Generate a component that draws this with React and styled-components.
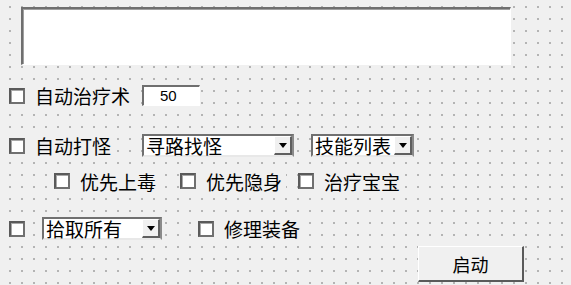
import React from 'react';
import styled, { createGlobalStyle } from 'styled-components';

const GlobalStyle = createGlobalStyle`
  html, body {
    margin: 0;
    padding: 0;
    background: #f0f0f0;
  }
  body {
    font-family: "Noto Sans CJK SC", "Liberation Sans", sans-serif;
    color: #000;
  }
`;

const CJK = `"Noto Sans CJK SC", "Noto Sans", sans-serif`;

const Canvas = styled.div`
  width: 571px;
  height: 285px;
  box-sizing: border-box;
  padding-top: 7px;
  display: flex;
  flex-direction: column;
  overflow: hidden;
  background-color: #f0f0f0;
  background-image: radial-gradient(circle at 0.5px 0.5px, #000 0.8px, transparent 1px);
  background-size: 12px 12px;
  background-position: 9.5px 6.5px;
`;

const Memo = styled.textarea`
  margin: 0 0 0 21px;
  width: 490px;
  height: 58px;
  box-sizing: border-box;
  resize: none;
  outline: none;
  background: #fff;
  border-style: solid;
  border-width: 2px 1px 1px 2px;
  border-color: #6f6f6f #fff #fff #6f6f6f;
  box-shadow: inset 1px 1px #a0a0a0;
`;

const Row = styled.div`
  display: flex;
  align-items: center;
  height: ${(p) => p.$h}px;
  margin-top: ${(p) => p.$mt}px;
`;

const Control = styled.label`
  display: flex;
  align-items: center;
  gap: 10px;
  flex: none;
  width: ${(p) => p.$w}px;
  margin-left: ${(p) => p.$ml || 0}px;
  height: 21px;
  background: #f0f0f0;
  font-family: ${CJK};
  font-size: 19px;
  line-height: 21px;
  white-space: nowrap;
`;

const Box = styled.span`
  flex: none;
  width: 16px;
  height: 16px;
  box-sizing: border-box;
  background: #fff;
  border: 2px solid #707070;
  border-top-color: #5a5a5a;
  border-left-color: #5a5a5a;
  box-shadow: inset 1px 1px #a8a8a8;
`;

const NumInput = styled.div`
  flex: none;
  margin-left: ${(p) => p.$ml}px;
  width: 58px;
  height: 21px;
  box-sizing: border-box;
  background: #fff;
  border-style: solid;
  border-width: 2px 1px 1px 2px;
  border-color: #6f6f6f #fff #fff #6f6f6f;
  padding-left: 16px;
  font-family: "Liberation Sans", Arial, sans-serif;
  font-size: 15px;
  line-height: 18px;
`;

const Combo = styled.div`
  flex: none;
  display: flex;
  align-items: stretch;
  margin-left: ${(p) => p.$ml || 0}px;
  width: ${(p) => p.$w}px;
  height: 23px;
  box-sizing: border-box;
  background: #fff;
  border-style: solid;
  border-width: 2px;
  border-color: #707070 #8a8a8a #e8e8e8 #707070;
`;

const ComboText = styled.span`
  flex: 1;
  min-width: 0;
  padding-left: 2px;
  font-family: ${CJK};
  font-size: 19px;
  line-height: 19px;
  white-space: nowrap;
`;

const ComboButton = styled.span`
  flex: none;
  width: 18px;
  box-sizing: border-box;
  display: flex;
  align-items: center;
  justify-content: center;
  background: #f0f0f0;
  border-style: solid;
  border-width: 1px 2px 2px 1px;
  border-color: #fff #5f5f5f #5f5f5f #fff;
`;

const Arrow = styled.span`
  width: 0;
  height: 0;
  border-left: 4.5px solid transparent;
  border-right: 4.5px solid transparent;
  border-top: 5px solid #000;
`;

const Button = styled.button`
  margin-left: 418px;
  width: 106px;
  height: 36px;
  box-sizing: border-box;
  background: #f0f0f0;
  border-style: solid;
  border-width: 1px 2px 2px 1px;
  border-color: #fff #5a5a5a #5a5a5a #fff;
  font-family: ${CJK};
  font-size: 18px;
  color: #000;
  padding: 0;
`;

const Check = ({ w, ml, children }) => (
  <Control $w={w} $ml={ml}>
    <Box />
    {children && <span>{children}</span>}
  </Control>
);

const Select = ({ w, ml, value }) => (
  <Combo $w={w} $ml={ml}>
    <ComboText>{value}</ComboText>
    <ComboButton>
      <Arrow />
    </ComboButton>
  </Combo>
);

const App = () => (
  <>
    <GlobalStyle />
    <Canvas>
      <Memo readOnly />
      <Row $mt={20} $h={21}>
        <Check w={124} ml={9}>自动治疗术</Check>
        <NumInput $ml={9}>50</NumInput>
      </Row>
      <Row $mt={28} $h={23}>
        <Check w={103} ml={9}>自动打怪</Check>
        <Select w={152} ml={30} value="寻路找怪" />
        <Select w={103} ml={17} value="技能列表" />
      </Row>
      <Row $mt={14} $h={20}>
        <Check w={102} ml={54}>优先上毒</Check>
        <Check w={106} ml={24}>优先隐身</Check>
        <Check w={102} ml={12}>治疗宝宝</Check>
      </Row>
      <Row $mt={26} $h={23}>
        <Check w={22} ml={9} />
        <Select w={120} ml={11} value="拾取所有" />
        <Check w={104} ml={36}>修理装备</Check>
      </Row>
      <Row $mt={6} $h={36}>
        <Button>启动</Button>
      </Row>
    </Canvas>
  </>
);

export default App;
